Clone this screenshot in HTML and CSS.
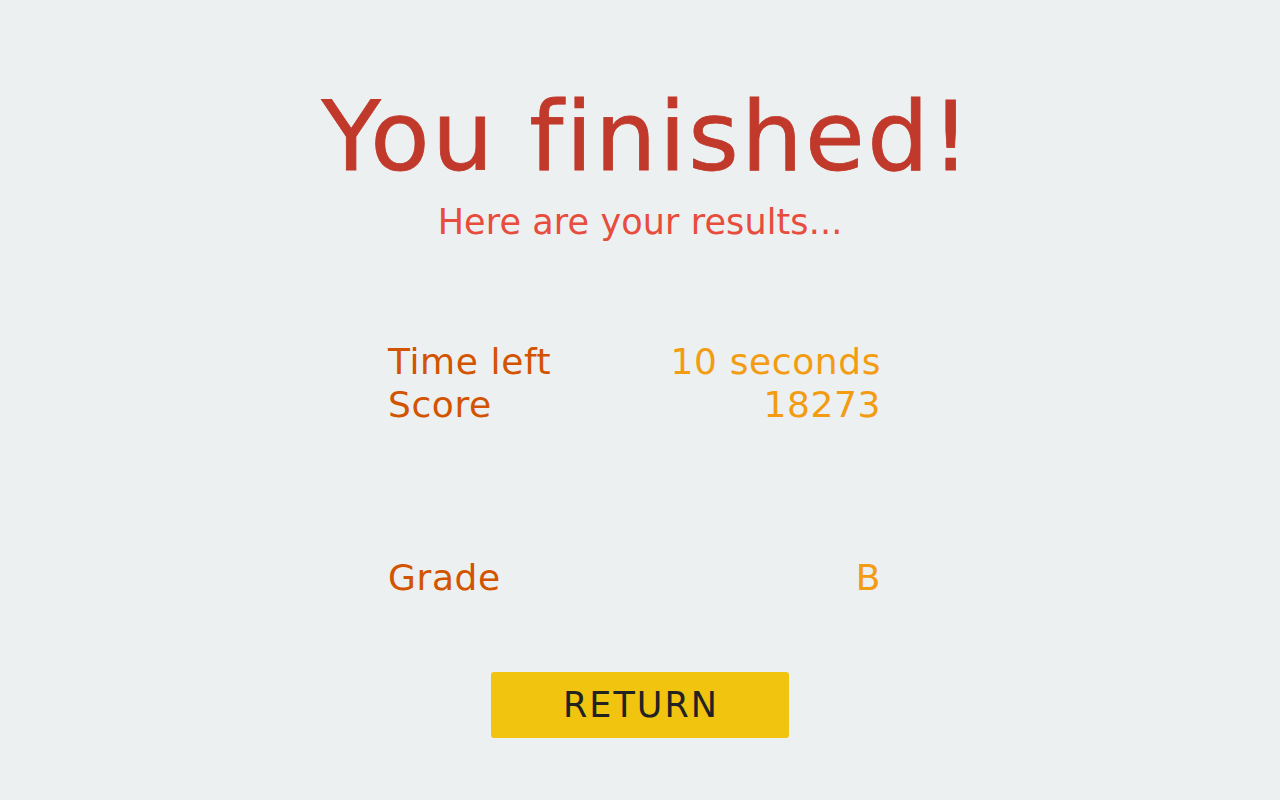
FILE: index.html
```html
<!DOCTYPE html>
<html>
<head>
<meta charset="utf-8">
<link rel="stylesheet" href="styles.css">
</head>
<body>
<main class="page">
  <header class="head">
    <h1 class="title">You finished!</h1>
    <p class="subtitle">Here are your results...</p>
  </header>
  <section class="results">
    <div class="row"><span class="label">Time left</span><span class="value">10 seconds</span></div>
    <div class="row"><span class="label">Score</span><span class="value">18273</span></div>
    <div class="row grade"><span class="label">Grade</span><span class="value">B</span></div>
  </section>
  <div class="actions">
    <button class="btn">RETURN</button>
  </div>
</main>
</body>
</html>
```
FILE: styles.css
```css
html, body {
  margin: 0;
  padding: 0;
  background: #ecf0f1;
  height: 100%;
}
body {
  font-family: "DejaVu Sans", "Noto Sans", sans-serif;
  font-variant-ligatures: none;
}
.page {
  display: flex;
  flex-direction: column;
  align-items: center;
  padding-top: 82px;
}
.head {
  text-align: center;
}
.title {
  margin: 0 0 0 14px;
  font-size: 97px;
  font-weight: 500;
  line-height: 110px;
  letter-spacing: 2.4px;
  color: #c0392b;
  -webkit-text-stroke: 0.8px #c0392b;
}
.subtitle {
  margin: 8px 0 0;
  font-size: 35px;
  line-height: 44px;
  letter-spacing: 0.1px;
  color: #e74c3c;
}
.results {
  width: 493px;
  margin-top: 96px;
  margin-left: -11px;
}
.row {
  display: flex;
  justify-content: space-between;
  font-size: 36px;
  line-height: 43px;
  letter-spacing: 0.6px;
}
.row.grade {
  margin-top: 130px;
}
.label { color: #d35400; }
.value { color: #f39c12; }
.actions {
  margin-top: 73px;
}
.btn {
  width: 298px;
  height: 66px;
  border: 0;
  border-radius: 3px;
  background: #f1c40f;
  color: #222;
  font-family: "DejaVu Sans", "Noto Sans", sans-serif;
  font-size: 35px;
  letter-spacing: 2px;
  padding: 0 0 0 2px;
}
```
